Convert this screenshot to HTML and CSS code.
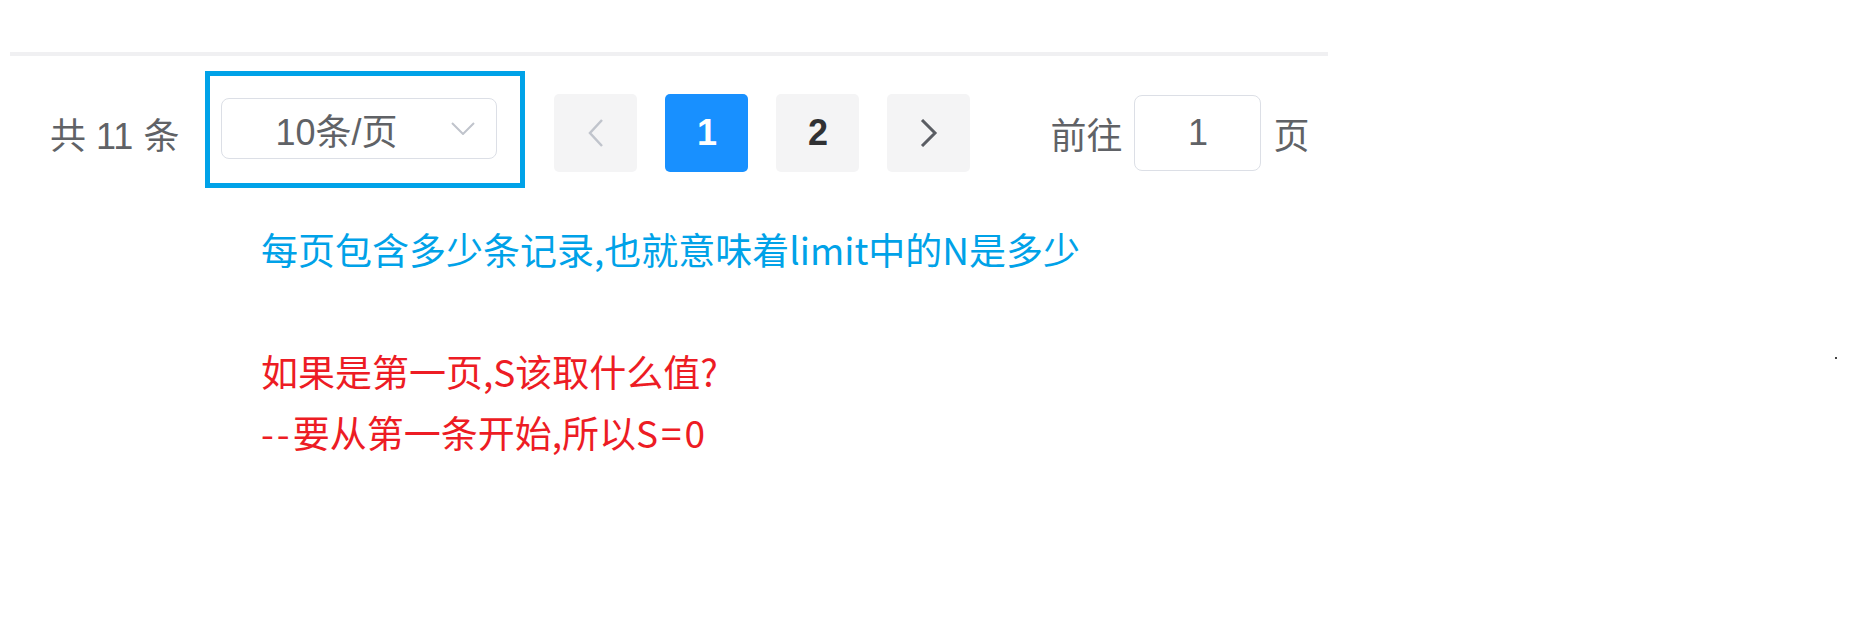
FILE: index.html
```html
<!DOCTYPE html>
<html lang="zh-CN">
<head>
    <meta charset="UTF-8">
    <title>分页说明</title>
    <link rel="stylesheet" href="styles.css">
</head>
<body>
    <div class="page">
        <div class="divider"></div>
        <div class="pager">
            <span class="total">共 11 条</span>
            <div class="mark-box">
                <div class="sizes">
                    <span class="sizes-text">10条/页</span>
                    <svg class="sizes-arrow" width="24" height="13" viewBox="0 0 24 13">
                        <polyline points="1,1 12,12 23,1" fill="none" stroke="#c0c4cc" stroke-width="2"/>
                    </svg>
                </div>
            </div>
            <button class="btn-nav">
                <svg width="16" height="28" viewBox="0 0 16 28">
                    <polyline points="14,1 2,14 14,27" fill="none" stroke="#c0c4cc" stroke-width="2.5"/>
                </svg>
            </button>
            <button class="btn-page active">1</button>
            <button class="btn-page">2</button>
            <button class="btn-nav">
                <svg width="18" height="28" viewBox="0 0 18 28">
                    <polyline points="2,1 15,14 2,27" fill="none" stroke="#5a5d63" stroke-width="3"/>
                </svg>
            </button>
            <span class="jump">前往</span>
            <div class="jump-input">1</div>
            <span class="jump-end">页</span>
        </div>
        <div class="notes">
            <p class="note-blue">每页包含多少条记录,也就意味着limit中的N是多少</p>
            <p class="note-gap"></p>
            <p class="note-red">如果是第一页,S该取什么值?</p>
            <p class="note-red"><span class="wide">--</span>要从第一条开始,所以<span class="wide">S=0</span></p>
        </div>
    </div>
    <div class="speck"></div>
</body>
</html>
```

FILE: styles.css
```css
body {
    margin: 0;
    background: #fff;
    font-family: 'Liberation Sans', 'Noto Sans CJK SC', sans-serif;
}

.page {
    padding: 52px 0 0 10px;
}

.divider {
    width: 1318px;
    height: 4px;
    background: #f0f0f2;
}

.pager {
    display: flex;
    align-items: center;
    margin-top: 15px;
    padding-left: 40px;
    font-size: 36px;
    color: #606266;
}

.total {
    margin-right: 26px;
    white-space: pre;
}

/* the hand-drawn highlight sits a little above the row */
.mark-box {
    border: 5px solid #00a2e8;
    padding: 22px 23px 24px 11px;
    margin-bottom: 7px;
}

.sizes {
    display: flex;
    align-items: center;
    width: 274px;
    height: 59px;
    border: 1px solid #dcdfe6;
    border-radius: 8px;
    box-sizing: content-box;
}

.sizes-text {
    margin-left: 53px;
}

.sizes-arrow {
    margin-left: auto;
    margin-right: 21px;
}

.btn-nav,
.btn-page {
    width: 83px;
    height: 78px;
    margin-left: 28px;
    border: none;
    border-radius: 5px;
    background: #f4f4f5;
    padding: 0;
    display: flex;
    align-items: center;
    justify-content: center;
    font-family: 'Liberation Sans', sans-serif;
    font-size: 36px;
    font-weight: bold;
    color: #303133;
}

.btn-nav:first-of-type {
    margin-left: 29px;
}

.btn-page.active {
    background: #1890ff;
    color: #fff;
}

.jump {
    margin-left: 80px;
}

.jump-input {
    width: 125px;
    height: 74px;
    margin: 0 12px;
    border: 1px solid #dcdfe6;
    border-radius: 8px;
    display: flex;
    align-items: center;
    justify-content: center;
    color: #606266;
}

.notes {
    margin-top: 24px;
    padding-left: 251px;
    font-family: 'Noto Sans CJK SC', sans-serif;
    font-size: 37px;
    line-height: 61px;
}

.notes p {
    margin: 0;
    height: 61px;
    white-space: nowrap;
}

.note-blue {
    color: #00a2e8;
}

.note-red {
    color: #ed1c24;
}

.wide {
    letter-spacing: 3px;
}

.speck {
    position: absolute;
    left: 1835px;
    top: 357px;
    width: 2px;
    height: 2px;
    background: #444;
}
```
